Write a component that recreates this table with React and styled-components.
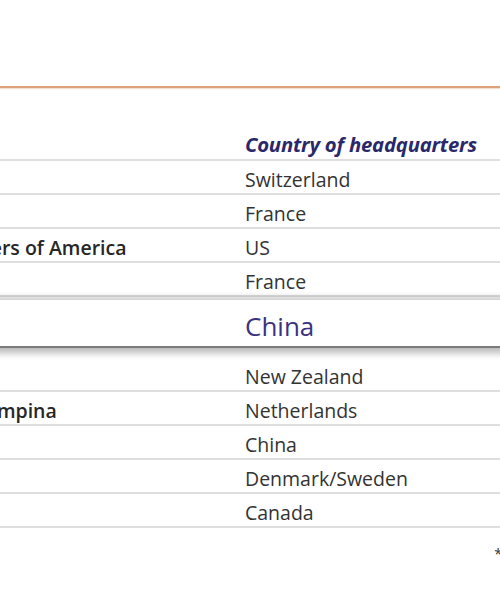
import React from 'react';
import styled, { createGlobalStyle } from 'styled-components';

const GlobalStyle = createGlobalStyle`
  html, body {
    margin: 0;
    padding: 0;
    background: #ffffff;
  }
  body {
    font-family: 'Open Sans', 'Liberation Sans', sans-serif;
  }
`;

const Slide = styled.div`
  width: 500px;
  height: 600px;
  overflow: hidden;
  background: #ffffff;
  display: flex;
  flex-direction: column;
`;

const Rule = styled.div`
  margin-top: 86px;
  height: 2px;
  background: #dda27a;
  box-shadow: 0 1px 1px rgba(221, 162, 122, 0.4);
`;

const Table = styled.div`
  margin-left: -113px;
  width: 660px;
  display: flex;
  flex-direction: column;
`;

const HeadRow = styled.div`
  display: grid;
  grid-template-columns: 358px 1fr;
  height: 71px;
  align-items: end;
  border-bottom: 2px solid #dedede;
`;

const HeadCell = styled.div`
  font-style: italic;
  font-weight: 700;
  font-size: 20.3px;
  color: #2a286a;
  padding-bottom: 1px;
  letter-spacing: -0.2px;
  white-space: nowrap;
`;

const Row = styled.div`
  display: grid;
  grid-template-columns: 358px 1fr;
  align-items: center;
  height: ${(p) => (p.$big ? '46px' : '32px')};
  border-bottom: 2px solid ${(p) => (p.$big ? '#7a7a7a' : '#dedede')};
  background: #ffffff;
  position: relative;
  z-index: ${(p) => (p.$big ? 2 : 1)};
  margin: ${(p) => (p.$big ? '3px 0 10px' : '0')};
  box-shadow: ${(p) =>
    p.$big
      ? '0 -4px 5px rgba(0,0,0,0.16), 0 5px 7px rgba(0,0,0,0.28)'
      : 'none'};
`;

const Company = styled.div`
  font-weight: 600;
  font-size: 19.5px;
  color: #262626;
  white-space: nowrap;
  overflow: hidden;
  padding-top: 4px;
`;

const Country = styled.div`
  font-size: ${(p) => (p.$big ? '26px' : '19.5px')};
  color: ${(p) => (p.$big ? '#3a3382' : '#333333')};
  white-space: nowrap;
  padding-top: ${(p) => (p.$big ? '6px' : '4px')};
`;

const Note = styled.div`
  align-self: flex-end;
  margin-top: 16px;
  margin-right: -2px;
  font-size: 14px;
  color: #333333;
`;

const rows = [
  ['Nestlé', 'Switzerland'],
  ['Lactalis', 'France'],
  ['Dairy Farmers of America', 'US'],
  ['Danone', 'France'],
  ['Yili', 'China', true],
  ['Fonterra', 'New Zealand'],
  ['FrieslandCampina', 'Netherlands'],
  ['Mengniu', 'China'],
  ['Arla Foods', 'Denmark/Sweden'],
  ['Saputo', 'Canada'],
];

export default function App() {
  return (
    <>
      <GlobalStyle />
      <Slide>
        <Rule />
        <Table>
          <HeadRow>
            <div />
            <HeadCell>Country of headquarters</HeadCell>
          </HeadRow>
          {rows.map(([company, country, big]) => (
            <Row key={company} $big={big}>
              <Company>{company}</Company>
              <Country $big={big}>{country}</Country>
            </Row>
          ))}
        </Table>
        <Note>*</Note>
      </Slide>
    </>
  );
}
